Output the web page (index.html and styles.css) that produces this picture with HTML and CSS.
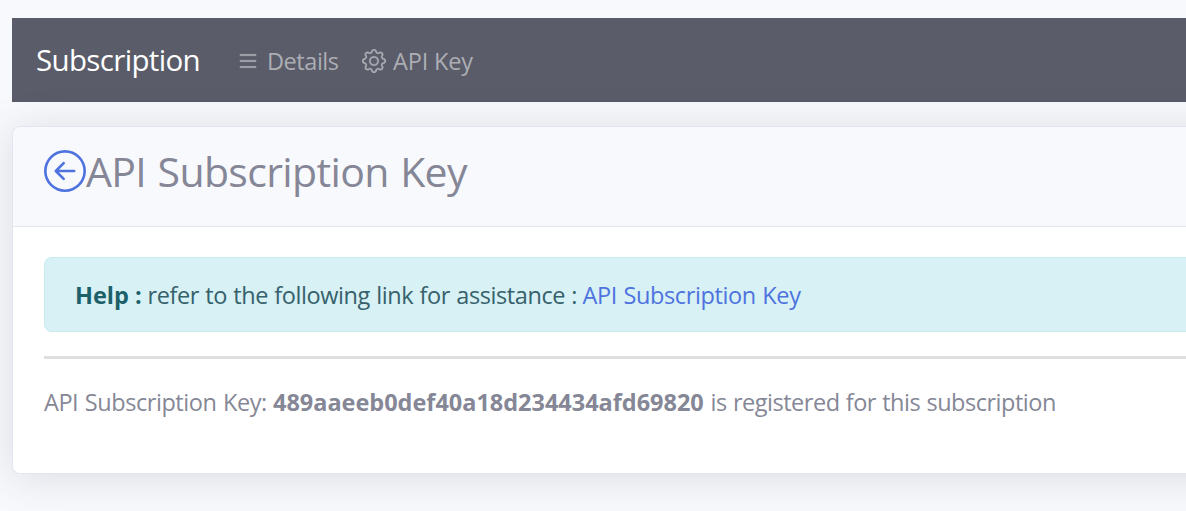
FILE: index.html
```html
<!DOCTYPE html>
<html lang="en">
<head>
<meta charset="utf-8">
<title>API Subscription Key</title>
<link rel="stylesheet" href="styles.css">
</head>
<body>
<nav class="navbar">
  <a class="brand">Subscription</a>
  <a class="nav-link details"><svg class="icon" viewBox="0 0 16 16" fill="currentColor"><path fill-rule="evenodd" d="M2.5 12a.5.5 0 0 1 .5-.5h10a.5.5 0 0 1 0 1H3a.5.5 0 0 1-.5-.5zm0-4a.5.5 0 0 1 .5-.5h10a.5.5 0 0 1 0 1H3a.5.5 0 0 1-.5-.5zm0-4a.5.5 0 0 1 .5-.5h10a.5.5 0 0 1 0 1H3a.5.5 0 0 1-.5-.5z"/></svg><span>Details</span></a>
  <a class="nav-link api"><svg class="icon" viewBox="0 0 16 16" fill="currentColor"><path d="M8 4.754a3.246 3.246 0 1 0 0 6.492 3.246 3.246 0 0 0 0-6.492zM5.754 8a2.246 2.246 0 1 1 4.492 0 2.246 2.246 0 0 1-4.492 0z"/><path d="M9.796 1.343c-.527-1.79-3.065-1.79-3.592 0l-.094.319a.873.873 0 0 1-1.255.52l-.292-.16c-1.64-.892-3.433.902-2.54 2.541l.159.292a.873.873 0 0 1-.52 1.255l-.319.094c-1.79.527-1.79 3.065 0 3.592l.319.094a.873.873 0 0 1 .52 1.255l-.16.292c-.892 1.64.901 3.434 2.541 2.54l.292-.159a.873.873 0 0 1 1.255.52l.094.319c.527 1.79 3.065 1.79 3.592 0l.094-.319a.873.873 0 0 1 1.255-.52l.292.16c1.64.893 3.434-.902 2.54-2.541l-.159-.292a.873.873 0 0 1 .52-1.255l.319-.094c1.79-.527 1.79-3.065 0-3.592l-.319-.094a.873.873 0 0 1-.52-1.255l.16-.292c.893-1.64-.902-3.433-2.541-2.54l-.292.159a.873.873 0 0 1-1.255-.52l-.094-.319zm-2.633.283c.246-.835 1.428-.835 1.674 0l.094.319a1.873 1.873 0 0 0 2.693 1.115l.291-.16c.764-.415 1.6.42 1.184 1.185l-.159.292a1.873 1.873 0 0 0 1.116 2.692l.318.094c.835.246.835 1.428 0 1.674l-.319.094a1.873 1.873 0 0 0-1.115 2.693l.16.291c.415.764-.42 1.6-1.185 1.184l-.291-.159a1.873 1.873 0 0 0-2.693 1.116l-.094.318c-.246.835-1.428.835-1.674 0l-.094-.319a1.873 1.873 0 0 0-2.692-1.115l-.292.16c-.764.415-1.6-.42-1.184-1.185l.159-.291A1.873 1.873 0 0 0 1.945 8.93l-.319-.094c-.835-.246-.835-1.428 0-1.674l.319-.094A1.873 1.873 0 0 0 3.06 4.377l-.16-.292c-.415-.764.42-1.6 1.185-1.184l.292.159a1.873 1.873 0 0 0 2.692-1.115l.094-.319z"/></svg><span>API Key</span></a>
</nav>
<main class="card">
  <header class="card-header">
    <a class="back"><svg viewBox="0 0 16 16" fill="currentColor"><path fill-rule="evenodd" d="M1 8a7 7 0 1 0 14 0A7 7 0 0 0 1 8zm15 0A8 8 0 1 1 0 8a8 8 0 0 1 16 0zm-4.5-.5a.5.5 0 0 1 0 1H5.707l2.147 2.146a.5.5 0 0 1-.708.708l-3-3a.5.5 0 0 1 0-.708l3-3a.5.5 0 1 1 .708.708L5.707 7.5H11.5z"/></svg></a>
    <h1 class="title">API Subscription Key</h1>
  </header>
  <div class="card-body">
    <div class="alert"><strong class="help">Help :</strong><span class="help-text">refer to the following link for assistance :</span><a class="help-link">API Subscription Key</a></div>
    <hr class="rule">
    <p class="status"><span class="key-label">API Subscription Key:</span><strong class="key">489aaeeb0def40a18d234434afd69820</strong><span class="key-state">is registered for this subscription</span></p>
  </div>
</main>
</body>
</html>
```
FILE: styles.css
```css
* { box-sizing: border-box; }
body {
  margin: 0;
  padding: 18px 0 0 12px;
  height: 511px;
  overflow: hidden;
  background: #f8f9fd;
  color: #858796;
  font-family: "Open Sans", sans-serif;
  font-size: 23.5px;
  line-height: 36px;
  white-space: nowrap;
}
.navbar {
  display: flex;
  align-items: center;
  height: 84px;
  padding-left: 24px;
  background: #5a5c69;
}
.brand { width: 200px; color: #fff; font-size: 29.5px; letter-spacing: -.65px; }
.nav-link { display: flex; align-items: center; padding-top: 2px; color: #acaeb4; }
.icon { width: 24px; height: 24px; margin-right: 7px; stroke: currentColor; stroke-width: .2; }
.details { width: 126px; letter-spacing: -.45px; }
.api { letter-spacing: -.15px; }
.card {
  position: relative;
  z-index: 0;
  height: 348px;
  margin-top: 24px;
  background: #fff;
  border: 1px solid #e3e6f0;
  border-right: 0;
  border-radius: 8px 0 0 8px;
}
/* The shadow continues evenly past the right edge of the viewport. */
.card::before {
  content: "";
  position: absolute;
  z-index: -1;
  inset: -1px -60px -1px -1px;
  border-radius: 8px;
  box-shadow: 0 3.6px 42px rgba(58, 59, 69, .15);
}
.card-header {
  display: flex;
  align-items: flex-start;
  height: 100px;
  padding: 19px 31px 0;
  background: #f8f9fd;
  border-bottom: 1px solid #e3e6f0;
  border-radius: 7px 0 0 0;
}
.back { width: 42px; height: 42px; margin-top: 4px; color: #4e73df; }
.back svg { display: block; width: 42px; height: 42px; }
.title { margin: 0; font-size: 41px; font-weight: 400; line-height: 50px; letter-spacing: -.65px; word-spacing: 1.5px; }
.card-body { padding: 30px 0 30px 31px; }
.alert {
  display: flex;
  height: 75px;
  padding: 19px 0 19px 30px;
  background: #d7f1f5;
  border: 1px solid #c7ebf1;
  border-right: 0;
  border-radius: 8px 0 0 8px;
  color: #36616b;
}
.help { width: 72.5px; color: #1c606a; }
.help-text { width: 435px; letter-spacing: -.41px; word-spacing: .6px; }
.help-link { color: #4e73df; letter-spacing: -.4px; word-spacing: 1px; }
.rule { height: 3px; margin: 24px 0; border: 0; background: #dfdfdf; }
.status { display: flex; margin: 0; padding-top: 1px; }
.key-label { width: 229px; letter-spacing: -.45px; word-spacing: 1px; }
.key { width: 437.5px; letter-spacing: -.02px; }
.key-state { letter-spacing: -.48px; word-spacing: .6px; }
strong { font-weight: 700; }
```
